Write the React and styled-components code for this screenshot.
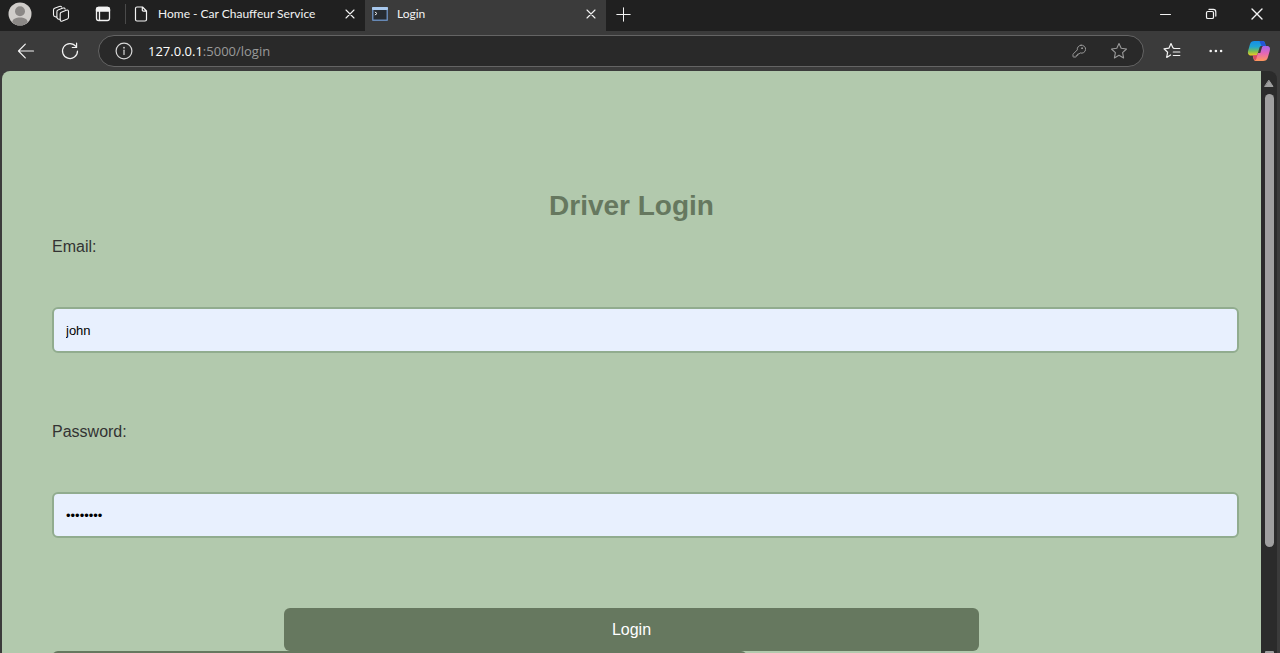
import React from "react";
import styled, { createGlobalStyle } from "styled-components";

const GlobalStyle = createGlobalStyle`
  * { box-sizing: border-box; }
  body { margin: 0; background: #3b3b3b; overflow: hidden; }
  button { font: inherit; color: inherit; border: 0; padding: 0; background: none; }
`;

const Window = styled.div`
  display: flex;
  flex-direction: column;
  height: 100vh;
  font-family: "Open Sans", "Noto Sans", sans-serif;
  color: #f3f3f3;
`;

const TabStrip = styled.header`
  display: flex;
  flex: none;
  height: 31px;
  background: #202020;
`;

const StripButton = styled.button`
  display: flex;
  flex: none;
  align-items: center;
  justify-content: center;
  width: ${(p) => p.$width}px;
  height: 28px;
`;

const Divider = styled.span`
  flex: none;
  width: 1px;
  height: 20px;
  margin: 4px 0 0 1px;
  background: #4a4a4a;
`;

const Tab = styled.div`
  display: flex;
  flex: 0 1 ${(p) => p.$width}px;
  align-items: center;
  min-width: 0;
  padding: 0 7px 3px 7px;
  font-family: Lato, "Open Sans", sans-serif;
  font-size: 12px;
  line-height: 16px;
  background: ${(p) => (p.$active ? "#3b3b3b" : "transparent")};
`;

const TabTitle = styled.span`
  flex: 1;
  margin-left: 9px;
  overflow: hidden;
  white-space: nowrap;
`;

const TabClose = styled.button`
  display: flex;
  align-items: center;
  justify-content: center;
  width: 16px;
  height: 16px;
`;

const WindowControls = styled.div`
  display: flex;
  margin-left: auto;
`;

const Toolbar = styled.nav`
  display: flex;
  flex: none;
  align-items: center;
  height: 40px;
  padding: 0 0 0 4px;
  background: #3b3b3b;
`;

const ToolButton = styled.button`
  display: flex;
  flex: none;
  align-items: center;
  justify-content: center;
  width: 44px;
  height: 32px;
`;

const CopilotButton = styled(ToolButton)`
  width: 42px;
`;

const AddressBar = styled.div`
  display: flex;
  flex: 1;
  align-items: center;
  height: 32px;
  margin: 0 6px;
  padding: 0 4px 0 16px;
  border: 1px solid #646464;
  border-radius: 16px;
  background: #292929;
  color: #d8d8d8;
`;

const Url = styled.span`
  flex: 1;
  margin-left: 15px;
  color: #9a9a9a;
  font-size: 13px;
  line-height: 20px;
`;

const Host = styled.span`
  color: #ffffff;
`;

const AddressButton = styled(ToolButton)`
  width: 40px;
  color: #9a9a9a;
`;

const Viewport = styled.div`
  display: flex;
  flex: 1;
  min-height: 0;
  padding: 0 3px 0 2px;
  background: #3b3b3b;
`;

const Page = styled.main`
  flex: 1;
  overflow: hidden;
  padding: 119px 50px 0;
  border-top-left-radius: 8px;
  background: #b2c9ad;
  color: #333333;
  font-family: "Liberation Sans", Arial, sans-serif;
  font-size: 16px;
  line-height: 18px;
`;

const Title = styled.h2`
  margin: 0 0 16px;
  color: #66785f;
  font-size: 28px;
  line-height: 32px;
  text-align: center;
`;

const Field = styled.div`
  margin-bottom: 70px;
`;

const Label = styled.label`
  display: block;
  margin-bottom: 51px;
`;

const Input = styled.input`
  display: block;
  box-sizing: content-box;
  width: 100%;
  height: 18px;
  padding: 12px;
  border: 2px solid #91ac8f;
  border-radius: 6px;
  outline: 0;
  background: #e8f0fe;
  color: #000000;
  font: 13px "Liberation Sans", Arial, sans-serif;
`;

const LoginButton = styled.button`
  display: block;
  width: 60%;
  height: 43px;
  margin: 0 auto;
  border-radius: 6px;
  background: #66785f;
  color: #ffffff;
`;

const NextBlock = styled.div`
  width: 60%;
  height: 43px;
  border-radius: 6px;
  background: #66785f;
`;

const Scrollbar = styled.div`
  display: flex;
  flex: none;
  flex-direction: column;
  align-items: center;
  width: 16px;
  padding-top: 8px;
  border-top-right-radius: 8px;
  background: #2b2b2b;
  color: #9f9f9f;
`;

const ScrollThumb = styled.div`
  flex: 0 1 79%;
  width: 9px;
  margin-top: 5px;
  border-radius: 5px;
  background: #9f9f9f;
`;

const ScrollEnd = styled.div`
  width: 9px;
  height: 2px;
  margin-top: auto;
  border-radius: 1px 1px 0 0;
  background: #9f9f9f;
`;

const Icon = ({ size = 16, width = 1, children, ...rest }) => (
  <svg
    width={size}
    height={size}
    viewBox={`0 0 ${size} ${size}`}
    fill="none"
    stroke="currentColor"
    strokeWidth={width}
    strokeLinecap="round"
    strokeLinejoin="round"
    aria-hidden="true"
    {...rest}
  >
    {children}
  </svg>
);

const Avatar = () => (
  <Icon size={24} stroke="none">
    <circle cx="12" cy="12" r="11.5" fill="#d0cdca" />
    <circle cx="12" cy="9.3" r="5" fill="#8b8886" />
    <path d="M4.300 20.400c0-3.600 3.500-5 7.700-5s7.700 1.400 7.700 5A11.300 11.300 0 0 1 12 23.300a11.300 11.300 0 0 1-7.700-2.900z" fill="#8b8886" />
  </Icon>
);

const Workspaces = () => (
  <Icon size={18} width={1.1}>
    <path d="M9.300 7.300 14.300 5.300q2.200-.8 2.200 1.100v5.800q0 1.200-1.100 1.700l-5 2q-2.200.9-2.200-1.200V8.900q0-1.200 1.100-1.600z" />
    <path d="M8 14.200 6.800 14.200q-1.900-.3-1.900-2V6.700q0-1.200 1.100-1.600l5-2q1.700-.6 2.100 1" />
    <path d="M4.700 12.100 3.300 11.700q-1.800-.3-1.800-2V4.900q0-1.200 1.100-1.600l4.700-1.800q1.700-.6 2.300.5" />
  </Icon>
);

const TabActions = () => (
  <Icon size={16} width={1.3}>
    <rect x="1.500" y="1.500" width="13" height="13" rx="2.200" />
    <path d="M1.500 3.500q0-2 2-2h9q2 0 2 2V5h-13z" fill="currentColor" />
    <path d="M4.500 5v9.300" />
  </Icon>
);

const PageIcon = () => (
  <Icon size={16} width={1.2}>
    <path d="M4 1h5.500L13.500 5v8.500q0 1.500-1.500 1.500H4q-1.500 0-1.500-1.500v-11Q2.500 1 4 1zM9.300 1.200v2.800q0 1.200 1.200 1.200h2.800" />
  </Icon>
);

const ConsoleIcon = () => (
  <Icon size={16} stroke="none">
    <rect x="0" y="1" width="16" height="14" rx="1" fill="#6688b5" />
    <rect x="0" y="1" width="16" height="3" rx="1" fill="#a8c8ec" />
    <rect x="1.500" y="4" width="13" height="9.500" fill="#262b31" />
    <path d="M3.200 6.200 5 7.500 3.200 8.800" stroke="#e6e6e6" />
  </Icon>
);

const Cross = ({ size = 10, width = 1.1 }) => (
  <Icon size={size} width={width}>
    <path d={`M1 1 ${size - 1} ${size - 1}M${size - 1} 1 1 ${size - 1}`} />
  </Icon>
);

const Plus = () => (
  <Icon size={15}>
    <path d="M7.500.8v13.400M.8 7.500h13.400" />
  </Icon>
);

const Minimize = () => (
  <Icon size={11}>
    <path d="M.5 5.500h10" />
  </Icon>
);

const Restore = () => (
  <Icon size={12} width={1.2}>
    <rect x="1.500" y="3.500" width="7" height="7" rx="1.300" />
    <path d="M4 1.400h4.300q2.500 0 2.500 2.500v4.200" />
  </Icon>
);

const Back = () => (
  <Icon size={18} width={1.2}>
    <path d="M16.500 9H1.500M8.300 2.200 1.500 9l6.800 6.800" />
  </Icon>
);

const Refresh = () => (
  <Icon size={18} width={1.2}>
    <path d="M16.500 9A7.500 7.500 0 1 1 14.900 4.400M15.600 1.200v4.300h-4.300" />
  </Icon>
);

const Info = () => (
  <Icon size={18} width={1.2}>
    <circle cx="9" cy="9" r="7.900" />
    <path d="M9 8.200v4.200" />
    <circle cx="9" cy="5.700" r=".3" fill="currentColor" />
  </Icon>
);

const Key = () => (
  <Icon size={14}>
    <path d="M9 1.200a4 4 0 1 1-.8 7.700L7.100 10H5.700v1.400H4.300v1.100q0 .5-.5.500H1.500q-.5 0-.5-.5v-1.900q0-.4.300-.7l4-4A4 4 0 0 1 9 1.200z" />
    <circle cx="10" cy="4.200" r=".5" fill="currentColor" />
  </Icon>
);

const Star = () => (
  <Icon size={18} width={1.1}>
    <path d="m9 1.500 2.200 4.800 5.300.7-3.900 3.600 1 5.300L9 13.300l-4.600 2.600 1-5.300L1.500 7l5.300-.7z" />
  </Icon>
);

const Favorites = () => (
  <Icon size={18} width={1.2}>
    <path d="M10.800 6.300 9.900 5.800 8 1.500 5.900 6.200 1 6.800l3.600 3.500-.9 5.100L7.600 13M10.800 6.500h6M10.300 10h6.500M10.300 13.500h6.500" />
  </Icon>
);

const More = () => (
  <Icon size={16} stroke="none" fill="currentColor">
    <circle cx="2.700" cy="8" r="1.300" />
    <circle cx="7.900" cy="8" r="1.300" />
    <circle cx="13.100" cy="8" r="1.300" />
  </Icon>
);

const Copilot = () => (
  <Icon size={24} stroke="none">
    <defs>
      <linearGradient id="cool" x1="0" y1="0" x2="0" y2="1">
        <stop offset="0" stopColor="#168de8" />
        <stop offset=".4" stopColor="#20a5d2" />
        <stop offset=".7" stopColor="#76bd56" />
        <stop offset="1" stopColor="#f3ca20" />
      </linearGradient>
      <linearGradient id="warm" x1="0" y1="0" x2="0" y2="1">
        <stop offset="0" stopColor="#a665ee" />
        <stop offset=".5" stopColor="#e668b3" />
        <stop offset="1" stopColor="#ff985b" />
      </linearGradient>
    </defs>
    <path d="M7.500 2H15.500c1.500 0 2 .8 2.500 2.300L18.800 7H14.500c-1.200 0-1.700.6-2.100 1.900L10.900 14c-.5 1.800-1.200 2.500-2.800 2.500H4c-3 0-3.500-2.500-2.800-5L2.900 5.500C3.700 2.900 5 2 7.500 2z" fill="url(#cool)" />
    <path d="M12.500 2h3c1.500 0 2 .8 2.500 2.300L18.800 7h-4.300z" fill="#2455d5" />
    <path d="M16 22H9.300c-1.800 0-2.300-.8-2.800-2.300L5.700 16.500h2.400c1.600 0 2.300-.7 2.800-2.500h2.400l1.500-5.100c.4-1.300.9-1.900 2.100-1.900H20c3 0 3.400 2.400 2.700 5L21 18c-.8 3-2.500 4-5 4z" fill="url(#warm)" />
    <path d="M5.700 16.500h2.400c1.600 0 2.300-.7 2.800-2.500l-1.200 4.500c-.4 1.700-.9 2.900-2 2.900z" fill="#d94b62" />
  </Icon>
);

export default function App() {
  return (
    <>
      <GlobalStyle />
      <Window>
        <TabStrip>
          <StripButton $width={40} aria-label="Profile"><Avatar /></StripButton>
          <StripButton $width={41} aria-label="Workspaces"><Workspaces /></StripButton>
          <StripButton $width={43} aria-label="Tab actions"><TabActions /></StripButton>
          <Divider />
          <Tab $width={239}>
            <PageIcon />
            <TabTitle>Home - Car Chauffeur Service</TabTitle>
            <TabClose aria-label="Close Home tab"><Cross /></TabClose>
          </Tab>
          <Tab $width={241} $active>
            <ConsoleIcon />
            <TabTitle>Login</TabTitle>
            <TabClose aria-label="Close Login tab"><Cross /></TabClose>
          </Tab>
          <StripButton $width={34} aria-label="New tab"><Plus /></StripButton>
          <WindowControls>
            <StripButton $width={46} aria-label="Minimize"><Minimize /></StripButton>
            <StripButton $width={46} aria-label="Restore"><Restore /></StripButton>
            <StripButton $width={46} aria-label="Close window"><Cross size={12} width={1.4} /></StripButton>
          </WindowControls>
        </TabStrip>
        <Toolbar>
          <ToolButton aria-label="Back"><Back /></ToolButton>
          <ToolButton aria-label="Refresh"><Refresh /></ToolButton>
          <AddressBar>
            <Info />
            <Url><Host>127.0.0.1</Host>:5000/login</Url>
            <AddressButton aria-label="Passwords"><Key /></AddressButton>
            <AddressButton aria-label="Add to favorites"><Star /></AddressButton>
          </AddressBar>
          <ToolButton aria-label="Favorites"><Favorites /></ToolButton>
          <ToolButton aria-label="Settings and more"><More /></ToolButton>
          <CopilotButton aria-label="Copilot"><Copilot /></CopilotButton>
        </Toolbar>
        <Viewport>
          <Page>
            <Title>Driver Login</Title>
            <form onSubmit={(e) => e.preventDefault()}>
              <Field>
                <Label htmlFor="email">Email:</Label>
                <Input id="email" type="text" defaultValue="john" />
              </Field>
              <Field>
                <Label htmlFor="password">Password:</Label>
                <Input id="password" type="password" defaultValue="password" />
              </Field>
              <LoginButton type="submit">Login</LoginButton>
            </form>
            <NextBlock />
          </Page>
          <Scrollbar>
            <Icon size={10} stroke="currentColor" fill="currentColor">
              <path d="M5 1.500 9 7.500H1z" />
            </Icon>
            <ScrollThumb />
            <ScrollEnd />
          </Scrollbar>
        </Viewport>
      </Window>
    </>
  );
}
